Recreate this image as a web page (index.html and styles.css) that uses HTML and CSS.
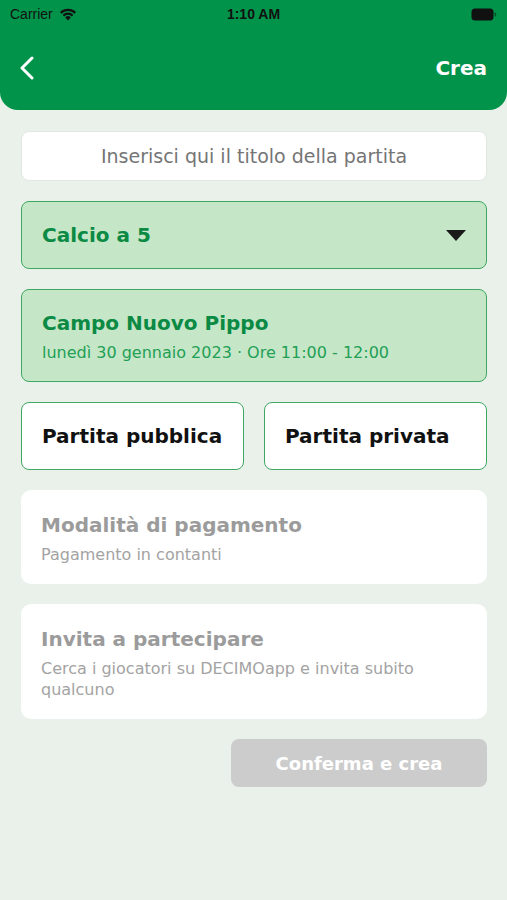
FILE: index.html
```html
<!DOCTYPE html>
<html lang="it">
<head>
<meta charset="utf-8">
<link rel="stylesheet" href="styles.css">
</head>
<body>
<header class="topbar">
  <div class="status">
    <div class="status-left">
      <span class="carrier">Carrier</span>
      <svg class="wifi" width="18" height="13" viewBox="0 0 18 13"><path d="M9 12.5 L6.2 9.4 A4 4 0 0 1 11.8 9.4 Z" fill="#111"/><path d="M3.6 6.8 A7.6 7.6 0 0 1 14.4 6.8 L12.9 8.4 A5.5 5.5 0 0 0 5.1 8.4 Z" fill="#111"/><path d="M1 4.1 A11.4 11.4 0 0 1 17 4.1 L15.5 5.7 A9.2 9.2 0 0 0 2.5 5.7 Z" fill="#111"/></svg>
    </div>
    <span class="time">1:10 AM</span>
    <div class="status-right">
      <svg width="26" height="13" viewBox="0 0 26 13"><rect x="0.5" y="0.5" width="22" height="12" rx="3.5" fill="#111"/><rect x="23.5" y="4.5" width="1.6" height="4" rx="0.8" fill="#111" opacity="0.5"/></svg>
    </div>
  </div>
  <nav class="navrow">
    <svg class="back" width="16" height="24" viewBox="0 0 16 24"><path d="M13 2 L3 12 L13 22" fill="none" stroke="#fff" stroke-width="3" stroke-linecap="round" stroke-linejoin="round"/></svg>
    <span class="crea">Crea</span>
  </nav>
</header>

<main class="content">
  <div class="title-input">Inserisci qui il titolo della partita</div>

  <div class="select-box">
    <span class="select-label">Calcio a 5</span>
    <svg width="22" height="13" viewBox="0 0 22 13"><path d="M1 1 H21 L11 12 Z" fill="#1a1a1a"/></svg>
  </div>

  <div class="field-box">
    <div class="field-title">Campo Nuovo Pippo</div>
    <div class="field-sub">lunedì 30 gennaio 2023 · Ore 11:00 - 12:00</div>
  </div>

  <div class="choice-row">
    <div class="choice">Partita pubblica</div>
    <div class="choice">Partita privata</div>
  </div>

  <div class="card">
    <div class="card-title">Modalità di pagamento</div>
    <div class="card-sub">Pagamento in contanti</div>
  </div>

  <div class="card card-tall">
    <div class="card-title">Invita a partecipare</div>
    <div class="card-sub">Cerca i giocatori su DECIMOapp e invita subito qualcuno</div>
  </div>

  <div class="actions">
    <div class="confirm">Conferma e crea</div>
  </div>
</main>
</body>
</html>
```

FILE: styles.css
```css
* { box-sizing: border-box; }
html, body { margin: 0; padding: 0; }
body {
  width: 507px;
  height: 900px;
  background: #e9f1ea;
  font-family: "DejaVu Sans", "Open Sans", sans-serif;
  overflow: hidden;
}
.topbar {
  background: #01934a;
  height: 110px;
  border-radius: 0 0 18px 18px;
  display: flex;
  flex-direction: column;
}
.status {
  height: 28px;
  display: flex;
  align-items: center;
  justify-content: space-between;
  padding: 0 10px 0 10px;
}
.status-left { display: flex; align-items: center; gap: 6px; width: 110px; }
.carrier { font-family: "Liberation Sans", sans-serif; font-size: 14px; color: #111; }
.time {
  font-family: "Liberation Sans", sans-serif;
  font-size: 14px;
  font-weight: bold;
  color: #111;
}
.status-right { width: 110px; display: flex; justify-content: flex-end; }
.navrow {
  display: flex;
  align-items: center;
  justify-content: space-between;
  padding: 0 20px 0 19px;
  height: 80px;
}
.crea { color: #fff; font-weight: 700; font-size: 20px; }
.content {
  padding: 21px 20px 0 21px;
  display: flex;
  flex-direction: column;
  gap: 20px;
}
.title-input {
  height: 50px;
  background: #fff;
  border: 1px solid #e3e6e3;
  border-radius: 8px;
  display: flex;
  align-items: center;
  justify-content: center;
  color: #757575;
  font-size: 19px;
}
.select-box {
  height: 68px;
  background: #c6e6c8;
  border: 1.5px solid #3ea862;
  border-radius: 8px;
  display: flex;
  align-items: center;
  justify-content: space-between;
  padding: 0 19px 0 20px;
}
.select-label { color: #0b8a44; font-weight: 700; font-size: 20px; }
.field-box {
  height: 93px;
  background: #c6e6c8;
  border: 1.5px solid #3ea862;
  border-radius: 8px;
  padding: 19px 20px 0 20px;
  display: flex;
  flex-direction: column;
  gap: 5px;
}
.field-title { color: #0b8a44; font-weight: 700; font-size: 20px; line-height: 28px; }
.field-sub { color: #22a055; font-size: 16px; line-height: 22px; }
.choice-row { display: flex; gap: 20px; }
.choice {
  flex: 1;
  height: 68px;
  background: #fff;
  border: 1.5px solid #3ea862;
  border-radius: 8px;
  display: flex;
  align-items: center;
  padding-left: 20px;
  font-weight: 700;
  font-size: 20px;
  color: #111;
}
.card {
  background: #fff;
  border-radius: 10px;
  height: 94px;
  padding: 21px 20px 0 20px;
}
.card-tall { height: 115px; }
.card-title { color: #9b9b9b; font-weight: 700; font-size: 20px; line-height: 28px; }
.card-sub { color: #a3a3a3; font-size: 16px; line-height: 21px; margin-top: 5px; }
.actions { display: flex; justify-content: flex-end; }
.confirm {
  width: 256px;
  height: 48px;
  background: #cccccc;
  border-radius: 8px;
  color: #fff;
  font-weight: 700;
  font-size: 18px;
  display: flex;
  align-items: center;
  justify-content: center;
}
```
